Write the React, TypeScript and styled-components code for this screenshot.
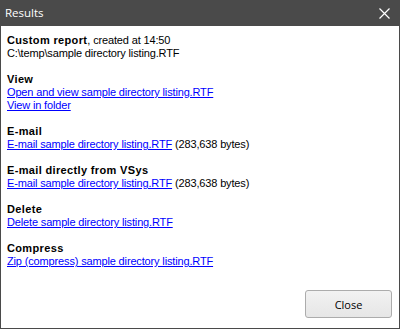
import { FC } from 'react'
import styled, { createGlobalStyle } from 'styled-components'

const GlobalStyle = createGlobalStyle`
	html, body {
		margin: 0;
		padding: 0;
		background: #ffffff;
	}
`

const Window = styled.div`
	width: 400px;
	height: 329px;
	box-sizing: border-box;
	border: 1px solid #4a4a4a;
	border-top: none;
	display: flex;
	flex-direction: column;
	background: #ffffff;
`

const TitleBar = styled.div`
	height: 26px;
	margin: 0 -1px;
	background: #4a4a4a;
	display: flex;
	align-items: center;
	justify-content: space-between;
	padding: 0 10px 0 5px;
	flex-shrink: 0;
`

const Title = styled.span`
	color: #ffffff;
	font-family: 'Open Sans', 'Liberation Sans', sans-serif;
	font-size: 11.5px;
	line-height: 16px;
	margin-top: -1px;
`

const CloseIcon = styled.svg`
	display: block;
`

const Content = styled.div`
	flex: 1;
	padding: 8px 6px 0 6px;
	font-family: 'Liberation Sans', Arial, sans-serif;
	font-size: 11px;
	line-height: 13px;
	letter-spacing: -0.15px;
	color: #000000;
`

const Section = styled.div`
	margin-bottom: 13px;
`

const Line = styled.div`
	white-space: nowrap;
`

const Heading = styled.b`
	font-weight: bold;
	letter-spacing: 0.35px;
`

const ActionLink = styled.a`
	color: #0000ff;
	text-decoration: underline;
	cursor: pointer;
`

const Footer = styled.div`
	display: flex;
	justify-content: flex-end;
	padding: 0 7px 10px 0;
`

const Button = styled.button`
	width: 87px;
	height: 28px;
	box-sizing: border-box;
	border: 1px solid #acacac;
	border-radius: 3px;
	background: linear-gradient(#f2f2f2, #e6e6e6);
	font-family: 'Open Sans', 'Liberation Sans', sans-serif;
	font-size: 11px;
	color: #000000;
	padding: 0;
`

const sections = [
	{ title: 'View', links: [{ label: 'Open and view sample directory listing.RTF' }, { label: 'View in folder' }] },
	{ title: 'E-mail', links: [{ label: 'E-mail sample directory listing.RTF', extra: ' (283,638 bytes)' }] },
	{ title: 'E-mail directly from VSys', links: [{ label: 'E-mail sample directory listing.RTF', extra: ' (283,638 bytes)' }] },
	{ title: 'Delete', links: [{ label: 'Delete sample directory listing.RTF' }] },
	{ title: 'Compress', links: [{ label: 'Zip (compress) sample directory listing.RTF' }] },
]

const App: FC = () => (
	<>
		<GlobalStyle />
		<Window>
			<TitleBar>
				<Title>Results</Title>
				<CloseIcon width="11" height="11" viewBox="0 0 11 11">
					<path d="M0.5 0.5 L10.5 10.5 M10.5 0.5 L0.5 10.5" stroke="#ffffff" strokeWidth="1.2" />
				</CloseIcon>
			</TitleBar>
			<Content>
				<Section>
					<Line>
						<Heading>Custom report</Heading>, created at 14:50
					</Line>
					<Line>C:\temp\sample directory listing.RTF</Line>
				</Section>
				{sections.map((s) => (
					<Section key={s.title}>
						<Line>
							<Heading>{s.title}</Heading>
						</Line>
						{s.links.map((l) => (
							<Line key={l.label}>
								<ActionLink>{l.label}</ActionLink>
								{l.extra}
							</Line>
						))}
					</Section>
				))}
			</Content>
			<Footer>
				<Button>Close</Button>
			</Footer>
		</Window>
	</>
)

export default App
